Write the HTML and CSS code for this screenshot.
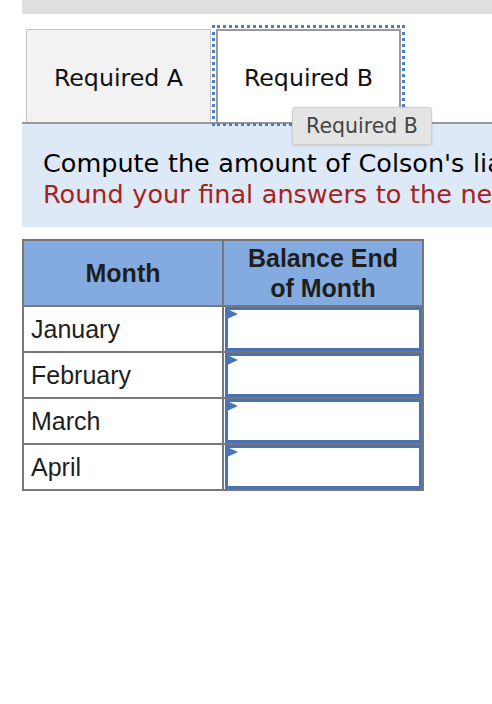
FILE: index.html
```html
<!DOCTYPE html>
<html>
<head>
<meta charset="utf-8">
<link rel="stylesheet" href="styles.css">
</head>
<body>
<div class="page">
  <div class="topbar"></div>
  <div class="tabs">
    <div class="tab tab-a">Required A</div>
    <div class="tab tab-b">Required B</div>
    <div class="tooltip">Required B</div>
  </div>
  <div class="panel">
    <div class="line">Compute the amount of Colson's liability at the end of each month.</div>
    <div class="line red">Round your final answers to the nearest whole dollar.</div>
  </div>
  <table class="grid">
    <thead>
      <tr>
        <th class="c1">Month</th>
        <th class="c2">Balance End<br>of Month</th>
      </tr>
    </thead>
    <tbody>
      <tr><td class="month">January</td><td class="inp"><div class="box"><span class="tri"></span></div></td></tr>
      <tr><td class="month">February</td><td class="inp"><div class="box"><span class="tri"></span></div></td></tr>
      <tr><td class="month">March</td><td class="inp"><div class="box"><span class="tri"></span></div></td></tr>
      <tr><td class="month">April</td><td class="inp"><div class="box"><span class="tri"></span></div></td></tr>
    </tbody>
  </table>
</div>
</body>
</html>
```
FILE: styles.css
```css
html, body {
  margin: 0;
  padding: 0;
  background: #ffffff;
}
.page {
  padding-left: 22px;
  width: 470px;
  overflow: hidden;
}
.topbar {
  height: 14px;
  background: #e0e0e0;
}
.tabs {
  position: relative;
  display: flex;
  align-items: flex-end;
  gap: 5px;
  padding: 15px 0 0 4px;
  border-bottom: 2px solid #9a9a9a;
  font-family: "DejaVu Sans", Verdana, sans-serif;
  font-size: 23.7px;
  color: #111;
}
.tab {
  width: 185px;
  height: 93px;
  box-sizing: border-box;
  display: flex;
  align-items: center;
  justify-content: center;
  padding-top: 3px;
}
.tab-a {
  background: #f2f2f2;
  border: 1px solid #c4c4c4;
  border-bottom: none;
}
.tab-b {
  background: #fff;
  border: 2px solid #9a9a9a;
  border-bottom: none;
  outline: 3px dotted #4a7cc9;
  outline-offset: 1px;
  position: relative;
  z-index: 1;
}
.tooltip {
  position: absolute;
  left: 270px;
  top: 93px;
  width: 140px;
  height: 38px;
  box-sizing: border-box;
  background: #e4e4e4;
  border: 1px solid #cfcfcf;
  border-radius: 3px;
  box-shadow: 0 1px 3px rgba(0,0,0,0.12);
  color: #444;
  font-size: 20.5px;
  display: flex;
  align-items: center;
  justify-content: center;
  z-index: 2;
}
.panel {
  background: #dde9f6;
  padding: 24px 0 17px 21px;
  font-family: "DejaVu Sans", Verdana, sans-serif;
  font-size: 25.5px;
  word-spacing: 0.5px;
  line-height: 31px;
  color: #000;
  white-space: nowrap;
  overflow: hidden;
}
.red {
  color: #a6231d;
}
.grid {
  margin-top: 12px;
  border-collapse: collapse;
  font-family: "Liberation Sans", Arial, sans-serif;
  font-size: 25px;
  color: #1e1e1e;
  width: 402px;
  table-layout: fixed;
}
.grid th, .grid td {
  border: 2px solid #777;
  padding: 0;
}
.grid th {
  background: #84abdf;
  font-weight: bold;
  height: 64px;
  line-height: 30px;
  text-align: center;
}
.c1 { width: 198px; }
.month {
  padding-left: 7px !important;
  text-align: left;
  vertical-align: middle;
}
.inp {
  padding: 0 0 0 1px !important;
  vertical-align: middle;
}
.box {
  position: relative;
  height: 44px;
  box-sizing: border-box;
  border: 3px solid #4a73b5;
  background: #fff;
}
.tri {
  position: absolute;
  left: -1px;
  top: -1px;
  width: 0;
  height: 0;
  border-top: 5.5px solid transparent;
  border-bottom: 5.5px solid transparent;
  border-left: 11px solid #4a73b5;
}
```
